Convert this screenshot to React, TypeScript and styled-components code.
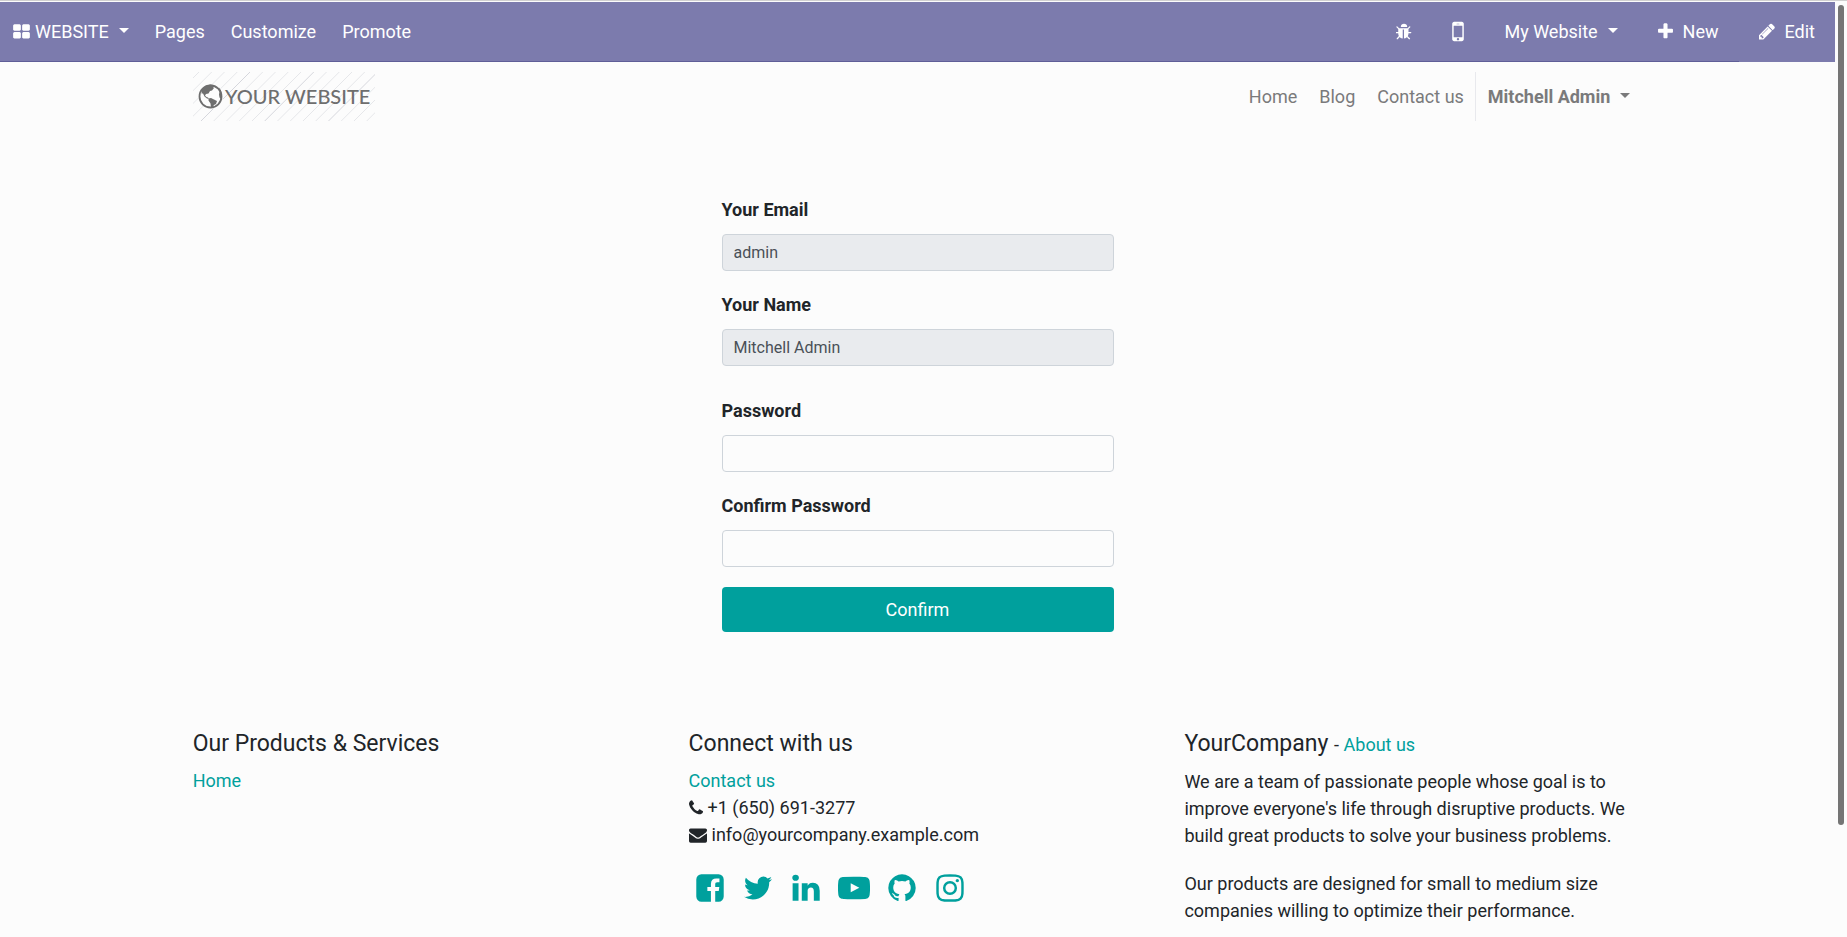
import React from "react";
import styled, { createGlobalStyle } from "styled-components";

const GlobalStyle = createGlobalStyle`
  *, *::before, *::after { box-sizing: border-box; }
  html { height: 100%; }
  body {
    height: 100%;
    margin: 0;
    overflow: hidden;
    background: #fcfcfc;
    color: #212529;
    font: 400 18px/27px Roboto, "Liberation Sans", sans-serif;
  }
  #root { height: 100%; }
  a { color: #00a09d; text-decoration: none; }
  h5, p, ul { margin: 0; padding: 0; }
`;

const icons = {
  thLarge:
    "M832 1024v384q0 52-38 90t-90 38h-512q-52 0-90-38t-38-90v-384q0-52 38-90t90-38h512q52 0 90 38t38 90zm0-768v384q0 52-38 90t-90 38h-512q-52 0-90-38t-38-90v-384q0-52 38-90t90-38h512q52 0 90 38t38 90zm896 768v384q0 52-38 90t-90 38h-512q-52 0-90-38t-38-90v-384q0-52 38-90t90-38h512q52 0 90 38t38 90zm0-768v384q0 52-38 90t-90 38h-512q-52 0-90-38t-38-90v-384q0-52 38-90t90-38h512q52 0 90 38t38 90z",
  bug:
    "M1632 960q0 26-19 45t-45 19h-224q0 171-67 290l208 209q19 19 19 45t-19 45q-18 19-45 19t-45-19l-198-197q-5 5-15 13t-42 28.500-65 36.500-82 29-97 13v-896h-128v896q-51 0-101.500-13.500t-87-33-66-39-43.500-32.500l-15-14-183 207q-20 21-48 21-24 0-43-16-19-18-20.500-44.500t15.500-46.500l202-227q-58-114-58-274h-224q-26 0-45-19t-19-45 19-45 45-19h224v-294l-173-173q-19-19-19-45t19-45 45-19 45 19l173 173h844l173-173q19-19 45-19t45 19 19 45-19 45l-173 173v294h224q26 0 45 19t19 45zm-416-576h-640q0-133 93.500-226.500t226.500-93.500 226.500 93.500 93.500 226.500z",
  mobile:
    "M976 1408q0-33-23.500-56.500t-56.500-23.500-56.500 23.500-23.500 56.500 23.500 56.500 56.500 23.500 56.500-23.500 23.500-56.500zm208-160v-704q0-13-9.500-22.500t-22.500-9.500h-512q-13 0-22.500 9.500t-9.500 22.500v704q0 13 9.500 22.500t22.500 9.500h512q13 0 22.500-9.500t9.500-22.500zm-192-848q0-16-16-16h-160q-16 0-16 16t16 16h160q16 0 16-16zm288-16v1024q0 52-38 90t-90 38h-512q-52 0-90-38t-38-90v-1024q0-52 38-90t90-38h512q52 0 90 38t38 90z",
  plus:
    "M1600 736v192q0 40-28 68t-68 28h-416v416q0 40-28 68t-68 28h-192q-40 0-68-28t-28-68v-416h-416q-40 0-68-28t-28-68v-192q0-40 28-68t68-28h416v-416q0-40 28-68t68-28h192q40 0 68 28t28 68v416h416q40 0 68 28t28 68z",
  pencil:
    "M491 1536l91-91-235-235-91 91v107h128v128h107zm523-928q0-22-22-22-10 0-17 7l-542 542q-7 7-7 17 0 22 22 22 10 0 17-7l542-542q7-7 7-17zm-54-192l416 416-832 832h-416v-416zm683 96q0 53-37 90l-166 166-416-416 166-165q36-38 90-38 53 0 91 38l235 234q37 39 37 91z",
  phone:
    "M1600 1240q0 27-10 70.500t-21 68.500q-21 50-122 106-94 51-186 51-27 0-53-3.500t-57.500-12.500-47-14.500-55.500-20.500-49-18q-98-35-175-83-127-79-264-216t-216-264q-48-77-83-175-3-9-18-49t-20.500-55.500-14.500-47-12.500-57.500-3.500-53q0-92 51-186 56-101 106-122 25-11 68.500-21t70.500-10q14 0 21 3 18 6 53 76 11 19 30 54t35 63.500 31 53.500q3 4 17.500 25t21.500 35.500 7 28.500q0 20-28.500 50t-62 55-62 53-28.500 46q0 9 5 22.500t8.500 20.500 14 24 11.500 19q76 137 174 235t235 174q2 1 19 11.500t24 14 20.500 8.500 22.500 5q18 0 46-28.500t53-62 55-62 50-28.500q14 0 28.500 7t35.500 21.500 25 17.500q25 15 53.500 31t63.500 35 54 30q70 35 76 53 3 7 3 21z",
  envelope:
    "M1792 710v794q0 66-47 113t-113 47h-1472q-66 0-113-47t-47-113v-794q44 49 101 87 362 246 497 345 57 42 92.500 65.500t94.500 48 110 24.500h2q51 0 110-24.500t94.500-48 92.500-65.500q170-123 498-345 57-39 100-87zm0-294q0 79-49 151t-122 123q-376 261-468 325-10 7-42.500 31t-54 38.500-52 32.500-57.500 27-50 9h-2q-23 0-50-9t-57.500-27-52-32.500-54-38.500-42.500-31q-91-64-262-182.500t-205-142.500q-62-42-117-115.500t-55-136.500q0-78 41.500-130t118.500-52h1472q65 0 112.500 47t47.500 113z",
  facebook:
    "M1376 128q119 0 203.500 84.500t84.500 203.500v960q0 119-84.500 203.500t-203.500 84.500h-188v-595h199l30-232h-229v-148q0-56 23.500-84t91.500-28l122-1v-207q-63-9-178-9-136 0-217.500 80t-81.500 226v171h-200v232h200v595h-532q-119 0-203.500-84.500t-84.500-203.500v-960q0-119 84.500-203.500t203.500-84.500h960z",
  twitter:
    "M1684 408q-67 98-162 167 1 14 1 42 0 130-38 259.500t-115.500 248.500-184.500 210.500-258 146-323 54.500q-271 0-496-145 35 4 78 4 225 0 401-138-105-2-188-64.500t-114-159.500q33 5 61 5 43 0 85-11-112-23-185.500-111.500t-73.500-205.500v-4q68 38 146 41-66-44-105-115t-39-154q0-88 44-163 121 149 294.500 238.500t371.500 99.500q-8-38-8-74 0-134 94.500-228.500t228.500-94.500q140 0 236 102 109-21 205-78-37 115-142 178 93-10 186-50z",
  linkedin:
    "M477 625v991h-330v-991h330zm21-306q1 73-50.500 122t-135.500 49h-2q-82 0-132-49t-50-122q0-74 51.500-122.500t134.500-48.500 133 48.500 51 122.500zm1166 729v568h-329v-530q0-105-40.500-164.500t-126.500-59.500q-63 0-105.500 34.500t-63.500 85.500q-11 30-11 81v553h-329q2-399 2-647t-1-296l-1-48h329v144h-2q20-32 41-56t56.500-52 87-43.500 114.500-15.500q171 0 275 113.500t104 332.500z",
  youtube:
    "M711 1128l484-250-484-253v503zm185-862q168 0 324.500 4.500t229.500 9.500l73 4q1 0 17 1.500t23 3 23.500 4.500 28.500 8 28 13 31 19.500 29 26.500q6 6 15.500 18.500t29 58.500 26.500 101q8 64 12.500 136.500t5.500 113.500v176q1 145-18 290-7 55-25 99.500t-32 61.500l-14 17q-14 15-29 26.500t-31 19-28 12.500-28.500 8-24 4.500-23 3-16.500 1.500q-251 19-627 19-207-2-359.500-6.500t-200.500-7.500l-49-4-36-4q-36-5-54.500-10t-51-21-56.500-41q-6-6-15.500-18.500t-29-58.500-26.500-101q-8-64-12.500-136.500t-5.500-113.500v-176q-1-145 18-290 7-55 25-99.500t32-61.500l14-17q14-15 29-26.500t31-19.500 28-13 28.500-8 23.500-4.500 23-3 17-1.500q251-18 627-18z",
  github:
    "M896 128q209 0 385.500 103t279.500 279.500 103 385.500q0 251-146.500 451.500t-378.500 277.500q-27 5-40-7t-13-30q0-3 .5-76.500t.5-134.500q0-97-52-142 57-6 102.500-18t94-39 81-66.500 53-105 20.500-150.500q0-119-79-206 37-91-8-204-28-9-81 11t-92 44l-38 24q-93-26-192-26t-192 26q-16-11-42.500-27t-83.500-38.500-85-13.500q-45 113-8 204-79 87-79 206 0 85 20.500 150t52.500 105 80.500 67 94 39 102.500 18q-39 36-49 103-21 10-45 15t-57 5-65.500-21.500-55.500-62.500q-19-32-48.500-52t-49.500-24l-20-3q-21 0-29 4.500t-5 11.500 9 14 13 12l7 5q22 10 43.500 38t31.500 51l10 23q13 38 44 61.500t67 30 69.500 7 55.500-3.500l23-4q0 38 .5 88.500t.5 54.500q0 18-13 30t-40 7q-232-77-378.500-277.500t-146.500-451.500q0-209 103-385.500t279.500-279.500 385.500-103z",
  instagram:
    "M1152 896q0-106-75-181t-181-75-181 75-75 181 75 181 181 75 181-75 75-181zm138 0q0 164-115 279t-279 115-279-115-115-279 115-279 279-115 279 115 115 279zm108-410q0 38-27 65t-65 27-65-27-27-65 27-65 65-27 65 27 27 65zm-502-220q-7 0-76.500-.5t-105.500 0-96.500 3-103 10-71.500 18.500q-50 20-88 58t-58 88q-11 29-18.500 71.500t-10 103-3 96.500 0 105.500.5 76.500-.5 76.500 0 105.500 3 96.500 10 103 18.500 71.500q20 50 58 88t88 58q29 11 71.500 18.500t103 10 96.500 3 105.500 0 76.500-.5 76.500.5 105.500 0 96.500-3 103-10 71.500-18.500q50-20 88-58t58-88q11-29 18.500-71.500t10-103 3-96.500 0-105.500-.5-76.500.5-76.500 0-105.500-3-96.500-10-103-18.500-71.500q-20-50-58-88t-88-58q-29-11-71.500-18.500t-103-10-96.500-3-105.500 0-76.500.5zm768 630q0 229-5 317-10 208-124 322t-322 124q-88 5-317 5t-317-5q-208-10-322-124t-124-322q-5-88-5-317t5-317q10-208 124-322t322-124q88-5 317-5t317 5q208 10 322 124t124 322q5 88 5 317z",
};

type IconName = keyof typeof icons;

const Svg = styled.svg`
  display: inline-block;
  flex: none;
  fill: currentColor;
`;

/* Glyphs share a 1792-unit square; x and w trim the side bearings. */
const Icon = ({ name, size = 18, x = 0, w = 1792 }: { name: IconName; size?: number; x?: number; w?: number }) => (
  <Svg viewBox={`${x} 0 ${w} 1792`} width={Math.round((size * w) / 1792)} height={size} aria-hidden="true">
    <path d={icons[name]} />
  </Svg>
);

const Shell = styled.div`
  display: flex;
  height: 100%;
  padding-top: 1px;
  border-top: 1px solid #d0d0d0;
`;

const Page = styled.div`
  flex: 1;
  min-width: 0;
  overflow: hidden;
`;

const ScrollTrack = styled.div`
  width: 12px;
  flex: none;
  padding: 3px 3px 0;
`;

const ScrollThumb = styled.div`
  height: 88%;
  border-radius: 3px;
  background: #757575;
`;

const TopBar = styled.header`
  display: flex;
  justify-content: space-between;
  height: 60px;
  background: #7c7bad;
`;

const BarGroup = styled.nav`
  display: flex;

  &:first-child {
    flex: 1;
    border-bottom: 1px solid #5f5e97;
  }
`;

const BarItem = styled.a<{ $pad?: number; $gap?: number; $line?: string }>`
  display: flex;
  align-items: center;
  gap: ${(p) => p.$gap ?? 5}px;
  padding: 0 ${(p) => p.$pad ?? 13}px;
  border-bottom: ${(p) => (p.$line ? `1px solid ${p.$line}` : "0")};
  color: #fff;
  white-space: nowrap;
`;

const Caret = styled.span`
  margin: 0 0 2px 5px;
  border: 5px solid transparent;
  border-top-color: currentColor;
  border-bottom: 0;
`;

const Container = styled.div`
  width: 79%;
  margin: 0 auto;
`;

const SiteHeader = styled(Container)`
  display: flex;
  align-items: center;
  justify-content: space-between;
  padding: 10px 0;
`;

const Logo = styled.a`
  display: block;
  height: 49px;
`;

const SiteNav = styled.nav`
  display: flex;
  align-items: center;
`;

const NavLink = styled.a<{ $user?: boolean }>`
  display: flex;
  align-items: center;
  gap: 5px;
  height: 49px;
  padding: 0 ${(p) => (p.$user ? 12 : 11)}px;
  color: #7a7a7b;
  font-weight: ${(p) => (p.$user ? 700 : 400)};
  border-left: ${(p) => (p.$user ? "1px solid #e8e9ed" : "0")};
`;

const Form = styled.form`
  width: 392px;
  max-width: 100%;
  margin: 65px auto 0;
`;

const Field = styled.div<{ $space?: number }>`
  margin-bottom: ${(p) => p.$space ?? 20}px;
`;

const Label = styled.label`
  display: block;
  margin-bottom: 10px;
  line-height: 28px;
  font-weight: 700;
`;

const Input = styled.input`
  display: block;
  width: 100%;
  height: 37px;
  padding: 0 11px;
  border: 1px solid #ced4da;
  border-radius: 4px;
  background: #fcfcfc;
  color: #495057;
  font: 400 16px/24px Roboto, "Liberation Sans", sans-serif;
  outline: 0;

  &:read-only { background: #e9ebee; }
`;

const Submit = styled.button`
  display: block;
  width: 100%;
  height: 45px;
  border: 0;
  border-radius: 4px;
  background: #00a09d;
  color: #fff;
  font: 400 18px/27px Roboto, "Liberation Sans", sans-serif;
`;

const Footer = styled.footer`
  padding-top: 98px;
`;

const Columns = styled(Container)`
  display: grid;
  grid-template-columns: repeat(3, 1fr);
  column-gap: 38px;
`;

const Title = styled.h5`
  margin-bottom: 9px;
  font-size: 23px;
  line-height: 28px;
  font-weight: 400;

  small { font-size: 18px; }
`;

const List = styled.ul`
  list-style: none;
`;

const Contact = styled.li`
  display: flex;
  align-items: center;
  gap: 5px;
`;

const Social = styled.div`
  display: flex;
  align-items: center;
  gap: 16px;
  margin-top: 24px;
  padding-left: 5px;

  a { display: flex; }
`;

const Text = styled.p`
  margin-bottom: 21px;
`;

const stripes = Array.from({ length: 18 }, (_, i) => 6 + i * 12.75);

const SiteLogo = () => (
  <svg width="182" height="49" viewBox="0 0 182 49" role="img" aria-label="Your Website">
    {stripes.map((x, i) => (
      <path key={x} d={`M${x} 0l-49 49`} stroke={i % 5 === 4 ? "#d6d7dd" : "#e6e7ea"} strokeWidth="1" />
    ))}
    <circle cx="17.500" cy="24.500" r="12.500" fill="#fcfcfc" />
    <circle cx="17.500" cy="24.500" r="11" fill="none" stroke="#6e6e6e" strokeWidth="1.800" />
    <g fill="#6e6e6e">
      <path d="M9 18l4-4 4-1.500 4 .5-1 2 1 1-2 2.500-2 .5-1.500 2.500-2.500.5-1 1.500 1.500 1.500 1.500.5 1 1.500-2-.5-2.500-2-1.500-3-1.500 0z" />
      <path d="M15.500 26.500l2.500-.5 3 1.500 3 1.500-1 3-2 1-1.500 2.500h-1.500l-.5-4-2-3z" />
      <path d="M26 15.500l2 3 1 5-.5 4-2-2-.5-3 .5-3z" />
    </g>
    <text x="32" y="32" fill="#6e6e6e" fontFamily="Lato, sans-serif" fontSize="20" fontWeight="500">YOUR WEBSITE</text>
  </svg>
);

const social: { name: IconName; label: string }[] = [
  { name: "facebook", label: "Facebook" },
  { name: "twitter", label: "Twitter" },
  { name: "linkedin", label: "LinkedIn" },
  { name: "youtube", label: "YouTube" },
  { name: "github", label: "GitHub" },
  { name: "instagram", label: "Instagram" },
];

const line = "#5f5e97";

export default function App() {
  return (
    <>
      <GlobalStyle />
      <Shell>
        <Page>
          <TopBar>
            <BarGroup>
              <BarItem href="#"><Icon name="thLarge" x={64} w={1664} />WEBSITE <Caret /></BarItem>
              <BarItem href="#">Pages</BarItem>
              <BarItem href="#">Customize</BarItem>
              <BarItem href="#">Promote</BarItem>
            </BarGroup>
            <BarGroup>
              <BarItem href="#" $line={line} $pad={20} aria-label="Debug"><Icon name="bug" x={96} w={1600} /></BarItem>
              <BarItem href="#" $line={line} $pad={20} aria-label="Mobile preview"><Icon name="mobile" size={27} x={512} w={768} /></BarItem>
              <BarItem href="#" $line={line} $pad={20}>My Website <Caret /></BarItem>
              <BarItem href="#" $line={line} $pad={20} $gap={10}><Icon name="plus" size={19} x={192} w={1408} />New</BarItem>
              <BarItem href="#" $line="transparent" $pad={20} $gap={10}><Icon name="pencil" x={128} w={1536} size={19} />Edit</BarItem>
            </BarGroup>
          </TopBar>
          <SiteHeader>
            <Logo href="#"><SiteLogo /></Logo>
            <SiteNav>
              <NavLink href="#">Home</NavLink>
              <NavLink href="#">Blog</NavLink>
              <NavLink href="#">Contact us</NavLink>
              <NavLink href="#" $user>Mitchell Admin <Caret /></NavLink>
            </SiteNav>
          </SiteHeader>
          <Form>
            <Field>
              <Label htmlFor="email">Your Email</Label>
              <Input id="email" defaultValue="admin" readOnly />
            </Field>
            <Field $space={31}>
              <Label htmlFor="name">Your Name</Label>
              <Input id="name" defaultValue="Mitchell Admin" readOnly />
            </Field>
            <Field>
              <Label htmlFor="password">Password</Label>
              <Input id="password" type="password" />
            </Field>
            <Field>
              <Label htmlFor="confirm">Confirm Password</Label>
              <Input id="confirm" type="password" />
            </Field>
            <Submit type="button">Confirm</Submit>
          </Form>
          <Footer>
            <Columns>
              <section>
                <Title>Our Products &amp; Services</Title>
                <List><li><a href="#">Home</a></li></List>
              </section>
              <section>
                <Title>Connect with us</Title>
                <List>
                  <li><a href="#">Contact us</a></li>
                  <Contact><Icon name="phone" x={192} w={1408} />+1 (650) 691-3277</Contact>
                  <Contact><Icon name="envelope" />info@yourcompany.example.com</Contact>
                </List>
                <Social>
                  {social.map((s) => (
                    <a key={s.name} href="#" aria-label={s.label}><Icon name={s.name} size={32} /></a>
                  ))}
                </Social>
              </section>
              <section>
                <Title>YourCompany <small>- <a href="#">About us</a></small></Title>
                <Text>We are a team of passionate people whose goal is to improve everyone's life through disruptive products. We build great products to solve your business problems.</Text>
                <Text>Our products are designed for small to medium size companies willing to optimize their performance.</Text>
              </section>
            </Columns>
          </Footer>
        </Page>
        <ScrollTrack><ScrollThumb /></ScrollTrack>
      </Shell>
    </>
  );
}
